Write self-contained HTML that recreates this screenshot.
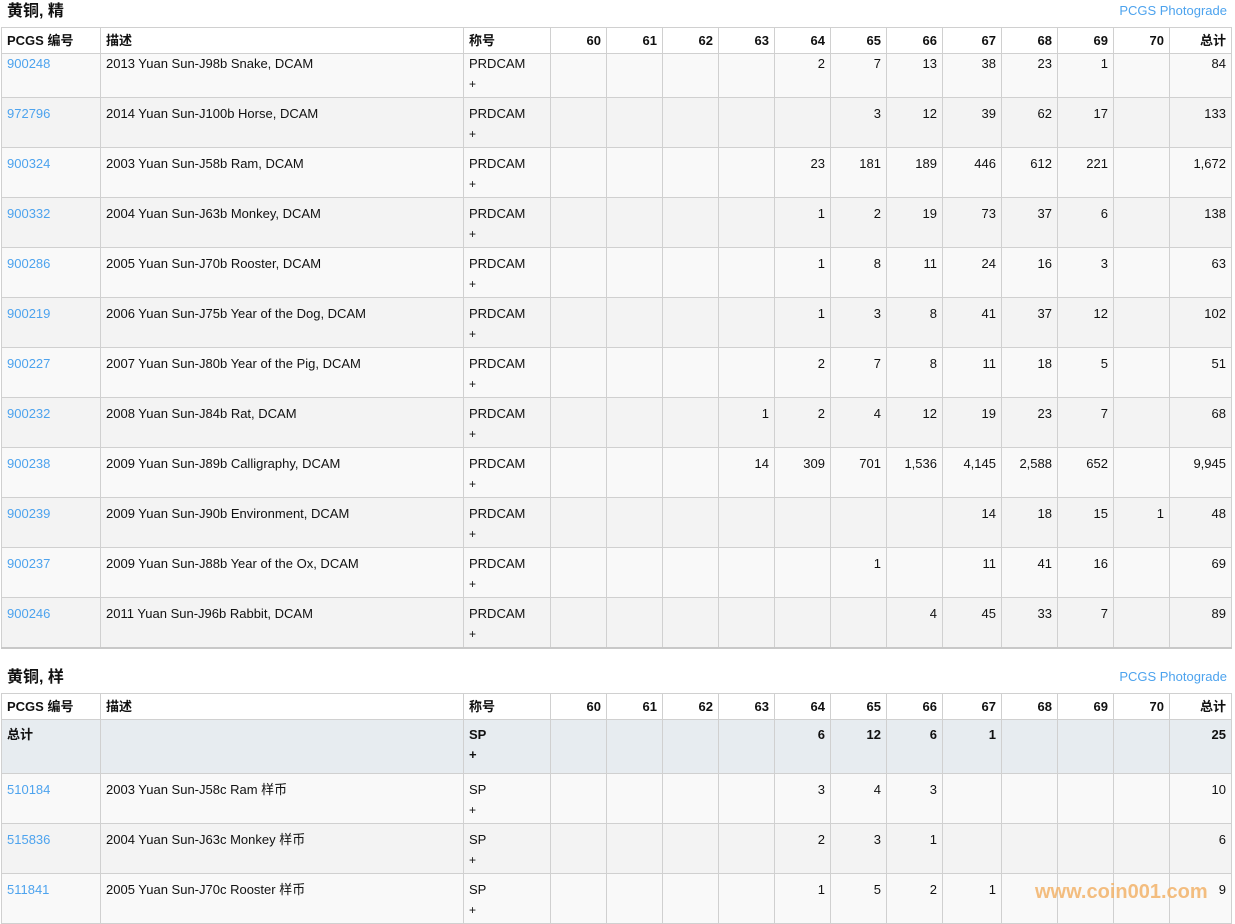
<!DOCTYPE html>
<html><head><meta charset="utf-8"><style>
body{margin:0;background:#fff;font-family:"Liberation Sans","Noto Sans CJK SC",sans-serif;font-size:13px;color:#111;width:1235px;height:922px;overflow:hidden;position:relative}
.title{position:absolute;left:7px;font-weight:bold;font-size:16px}
.pg{position:absolute;right:8px;color:#4da3ee;font-size:13px}
table{position:absolute;left:1px;border-collapse:collapse;table-layout:fixed;width:1231px}
td,th{border:1px solid #d0d0d0;vertical-align:top;padding:0 5px;line-height:20px;overflow:hidden;white-space:nowrap}
th{font-weight:bold;height:25px;line-height:25px;background:#fff;text-align:right}
th.l,td.l{text-align:left}
td{text-align:right;padding-top:6px;height:43px}
tr.f td{padding-top:0;height:43px}
tr:nth-child(even) td{background:#f9f9f9}
tr:nth-child(odd) td{background:#f3f3f3}
.t2 tr:nth-child(odd) td{background:#f9f9f9}
.t2 tr:nth-child(even) td{background:#f3f3f3}
.t2 tr.tot td{background:#e7ecf0;font-weight:bold;height:48px;padding-top:5px}
small{font-size:12px}
a{color:#4da3ee;text-decoration:none}
.t1{border-bottom:2px solid #c8c8c8}
</style></head><body>
<div class="title" style="top:-3px">黄铜, 精</div>
<div class="pg" style="top:3px">PCGS Photograde</div>
<table class="t1" style="top:27px">
<colgroup><col style="width:99px"><col style="width:363px"><col style="width:87px"><col style="width:56px"><col style="width:56px"><col style="width:56px"><col style="width:56px"><col style="width:56px"><col style="width:56px"><col style="width:56px"><col style="width:59px"><col style="width:56px"><col style="width:56px"><col style="width:56px"><col style="width:62px"></colgroup>
<tr><th class="l">PCGS 编号</th><th class="l">描述</th><th class="l">称号</th><th>60</th><th>61</th><th>62</th><th>63</th><th>64</th><th>65</th><th>66</th><th>67</th><th>68</th><th>69</th><th>70</th><th>总计</th></tr>
<tr class="f"><td class="l"><a>900248</a></td><td class="l">2013 Yuan Sun-J98b Snake, DCAM</td><td class="l">PRDCAM<br><small>+</small></td><td></td><td></td><td></td><td></td><td>2</td><td>7</td><td>13</td><td>38</td><td>23</td><td>1</td><td></td><td>84</td></tr>
<tr><td class="l"><a>972796</a></td><td class="l">2014 Yuan Sun-J100b Horse, DCAM</td><td class="l">PRDCAM<br><small>+</small></td><td></td><td></td><td></td><td></td><td></td><td>3</td><td>12</td><td>39</td><td>62</td><td>17</td><td></td><td>133</td></tr>
<tr><td class="l"><a>900324</a></td><td class="l">2003 Yuan Sun-J58b Ram, DCAM</td><td class="l">PRDCAM<br><small>+</small></td><td></td><td></td><td></td><td></td><td>23</td><td>181</td><td>189</td><td>446</td><td>612</td><td>221</td><td></td><td>1,672</td></tr>
<tr><td class="l"><a>900332</a></td><td class="l">2004 Yuan Sun-J63b Monkey, DCAM</td><td class="l">PRDCAM<br><small>+</small></td><td></td><td></td><td></td><td></td><td>1</td><td>2</td><td>19</td><td>73</td><td>37</td><td>6</td><td></td><td>138</td></tr>
<tr><td class="l"><a>900286</a></td><td class="l">2005 Yuan Sun-J70b Rooster, DCAM</td><td class="l">PRDCAM<br><small>+</small></td><td></td><td></td><td></td><td></td><td>1</td><td>8</td><td>11</td><td>24</td><td>16</td><td>3</td><td></td><td>63</td></tr>
<tr><td class="l"><a>900219</a></td><td class="l">2006 Yuan Sun-J75b Year of the Dog, DCAM</td><td class="l">PRDCAM<br><small>+</small></td><td></td><td></td><td></td><td></td><td>1</td><td>3</td><td>8</td><td>41</td><td>37</td><td>12</td><td></td><td>102</td></tr>
<tr><td class="l"><a>900227</a></td><td class="l">2007 Yuan Sun-J80b Year of the Pig, DCAM</td><td class="l">PRDCAM<br><small>+</small></td><td></td><td></td><td></td><td></td><td>2</td><td>7</td><td>8</td><td>11</td><td>18</td><td>5</td><td></td><td>51</td></tr>
<tr><td class="l"><a>900232</a></td><td class="l">2008 Yuan Sun-J84b Rat, DCAM</td><td class="l">PRDCAM<br><small>+</small></td><td></td><td></td><td></td><td>1</td><td>2</td><td>4</td><td>12</td><td>19</td><td>23</td><td>7</td><td></td><td>68</td></tr>
<tr><td class="l"><a>900238</a></td><td class="l">2009 Yuan Sun-J89b Calligraphy, DCAM</td><td class="l">PRDCAM<br><small>+</small></td><td></td><td></td><td></td><td>14</td><td>309</td><td>701</td><td>1,536</td><td>4,145</td><td>2,588</td><td>652</td><td></td><td>9,945</td></tr>
<tr><td class="l"><a>900239</a></td><td class="l">2009 Yuan Sun-J90b Environment, DCAM</td><td class="l">PRDCAM<br><small>+</small></td><td></td><td></td><td></td><td></td><td></td><td></td><td></td><td>14</td><td>18</td><td>15</td><td>1</td><td>48</td></tr>
<tr><td class="l"><a>900237</a></td><td class="l">2009 Yuan Sun-J88b Year of the Ox, DCAM</td><td class="l">PRDCAM<br><small>+</small></td><td></td><td></td><td></td><td></td><td></td><td>1</td><td></td><td>11</td><td>41</td><td>16</td><td></td><td>69</td></tr>
<tr><td class="l"><a>900246</a></td><td class="l">2011 Yuan Sun-J96b Rabbit, DCAM</td><td class="l">PRDCAM<br><small>+</small></td><td></td><td></td><td></td><td></td><td></td><td></td><td>4</td><td>45</td><td>33</td><td>7</td><td></td><td>89</td></tr>
</table>
<div class="title" style="top:663px">黄铜, 样</div>
<div class="pg" style="top:669px">PCGS Photograde</div>
<table class="t2" style="top:693px">
<colgroup><col style="width:99px"><col style="width:363px"><col style="width:87px"><col style="width:56px"><col style="width:56px"><col style="width:56px"><col style="width:56px"><col style="width:56px"><col style="width:56px"><col style="width:56px"><col style="width:59px"><col style="width:56px"><col style="width:56px"><col style="width:56px"><col style="width:62px"></colgroup>
<tr><th class="l">PCGS 编号</th><th class="l">描述</th><th class="l">称号</th><th>60</th><th>61</th><th>62</th><th>63</th><th>64</th><th>65</th><th>66</th><th>67</th><th>68</th><th>69</th><th>70</th><th>总计</th></tr>
<tr class="tot"><td class="l">总计</td><td class="l"></td><td class="l">SP<br>+</td><td></td><td></td><td></td><td></td><td>6</td><td>12</td><td>6</td><td>1</td><td></td><td></td><td></td><td>25</td></tr>
<tr><td class="l"><a>510184</a></td><td class="l">2003 Yuan Sun-J58c Ram 样币</td><td class="l">SP<br><small>+</small></td><td></td><td></td><td></td><td></td><td>3</td><td>4</td><td>3</td><td></td><td></td><td></td><td></td><td>10</td></tr>
<tr><td class="l"><a>515836</a></td><td class="l">2004 Yuan Sun-J63c Monkey 样币</td><td class="l">SP<br><small>+</small></td><td></td><td></td><td></td><td></td><td>2</td><td>3</td><td>1</td><td></td><td></td><td></td><td></td><td>6</td></tr>
<tr><td class="l"><a>511841</a></td><td class="l">2005 Yuan Sun-J70c Rooster 样币</td><td class="l">SP<br><small>+</small></td><td></td><td></td><td></td><td></td><td>1</td><td>5</td><td>2</td><td>1</td><td></td><td></td><td></td><td>9</td></tr>
</table>
<div style="position:absolute;left:1035px;top:881px;font-size:20px;font-weight:bold;color:#f3b36a;opacity:.85">www.coin001.com</div>
</body></html>
